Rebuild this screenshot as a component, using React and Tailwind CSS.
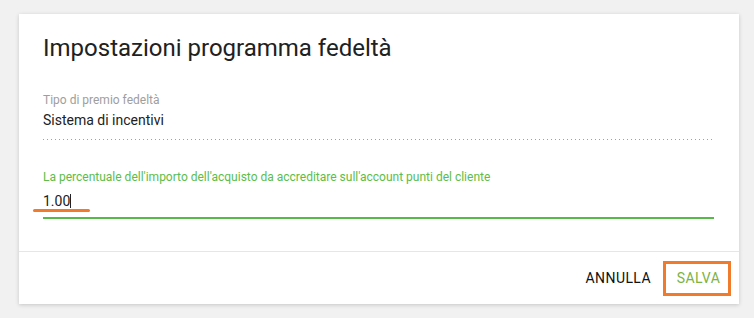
export default function App() {
  return (
    <div className="w-[754px] h-[318px] bg-[#f1f1f1] pt-[14px] pl-[19px] font-['Roboto',sans-serif]">
      <div className="w-[720px] h-[290px] bg-white shadow-[0_1px_4px_rgba(0,0,0,0.18)] flex flex-col">
        <div className="flex-1 pl-6 pr-[25px] pt-5">
          <h1 className="text-[24px] leading-[28px] text-[#212121] font-normal">
            Impostazioni programma fedeltà
          </h1>

          <div className="mt-[30px] text-[12px] leading-[16px] text-[#9e9e9e]">
            Tipo di premio fedeltà
          </div>
          <div className="mt-[2px] text-[14px] leading-[20px] text-[#212121]">
            Sistema di incentivi
          </div>
          <div className="mt-[9px] h-px bg-[linear-gradient(to_right,#a0a0a0_1px,transparent_1px)] bg-[length:4px_1px] bg-repeat-x" />

          <div className="mt-[29px] text-[12px] leading-[16px] text-[#5cbd4a]">
            La percentuale dell'importo dell'acquisto da accreditare sull'account punti del cliente
          </div>
          <div className="relative mt-[6px] text-[14px] leading-[20px] text-[#212121] flex items-center">
            <span>1.00</span>
            <span className="inline-block w-px h-[14px] bg-[#222]" />
            <span className="absolute left-[-10px] top-[18px] w-[57px] h-[3px] rounded-full bg-[#f07b2c]" />
          </div>
          <div className="mt-[6px] h-[2px] bg-[#57b947]" />
        </div>

        <div className="h-[53px] border-t border-[#e6e6e6] flex items-center justify-end pr-2">
          <button className="h-9 px-2 text-[14px] font-normal tracking-[0.03em] text-[#111] uppercase">
            Annulla
          </button>
          <div className="ml-[4px] w-[68px] h-[35px] border-[3px] border-[#f07b2c] flex items-center justify-center">
            <span className="text-[14px] font-normal tracking-[0.03em] text-[#7cb342] uppercase pl-[3px]">
              Salva
            </span>
          </div>
        </div>
      </div>
    </div>
  );
}
